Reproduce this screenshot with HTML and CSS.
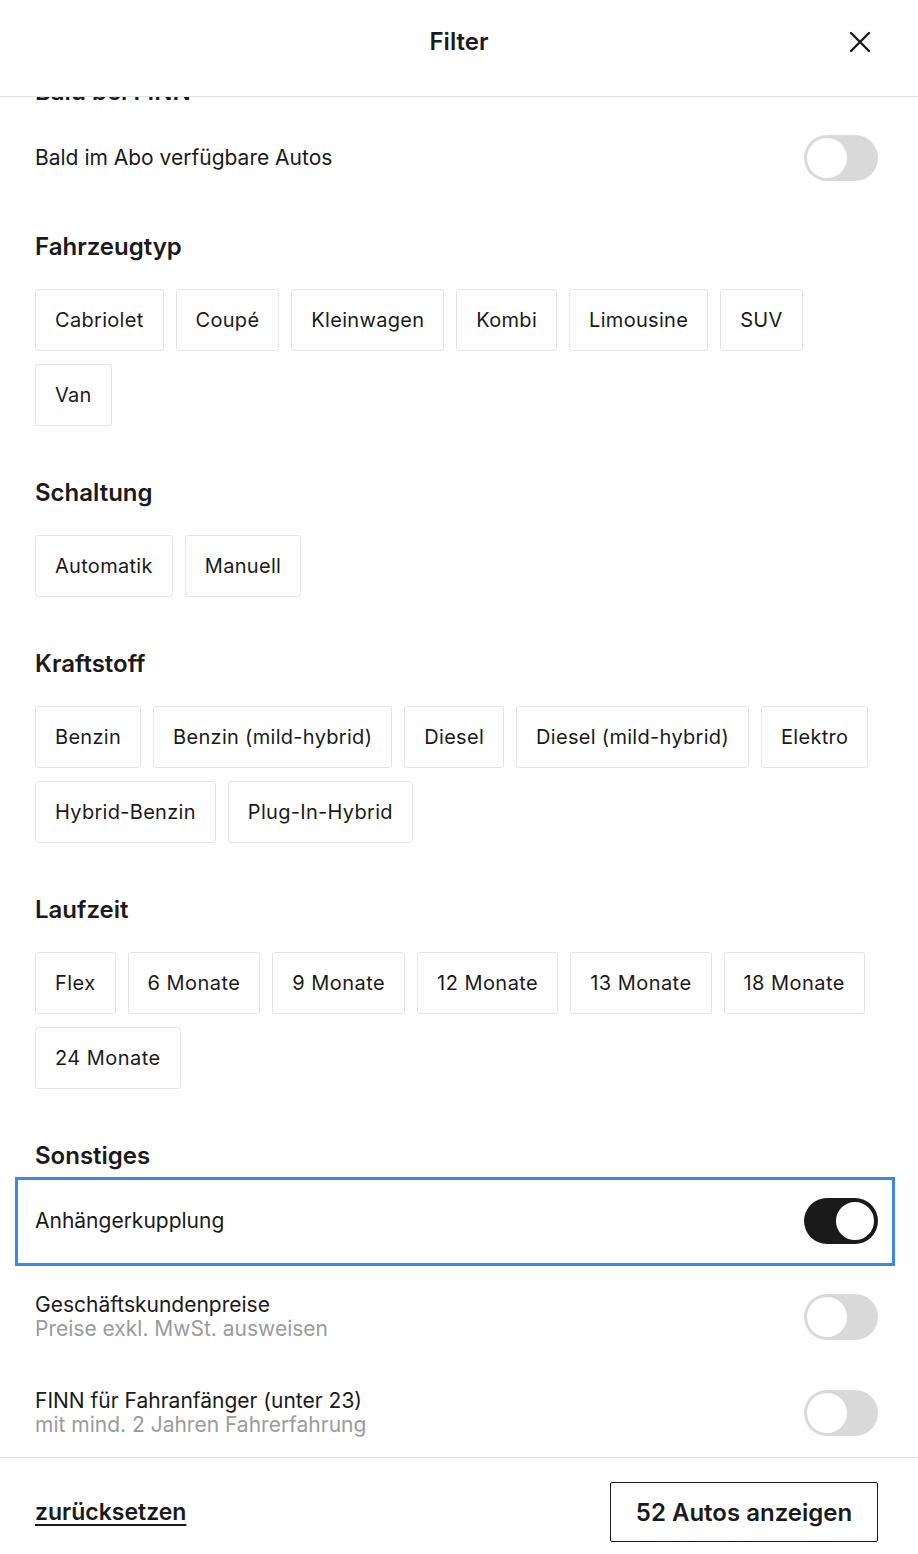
FILE: index.html
```html
<!DOCTYPE html>
<html lang="de">
<head>
    <meta charset="UTF-8">
    <meta name="viewport" content="width=device-width, initial-scale=1.0">
    <title>Filter</title>
    <link rel="stylesheet" href="styles.css">
</head>
<body>
    <div class="modal">
        <header class="modal-header">
            <div class="modal-title">Filter</div>
            <button class="close-btn" aria-label="Schließen">
                <svg width="22" height="22" viewBox="0 0 22 22">
                    <path d="M2 2 L20 20 M20 2 L2 20" stroke="#1a1a1a" stroke-width="2.4" stroke-linecap="round"/>
                </svg>
            </button>
        </header>

        <main class="modal-body">
            <div class="scroll-inner">
                <section class="section">
                    <h2 class="section-title">Bald bei FINN</h2>
                    <div class="switch-row">
                        <div class="switch-label">Bald im Abo verfügbare Autos</div>
                        <span class="toggle"></span>
                    </div>
                </section>

                <section class="section">
                    <h2 class="section-title">Fahrzeugtyp</h2>
                    <div class="chips">
                        <span class="chip">Cabriolet</span>
                        <span class="chip">Coupé</span>
                        <span class="chip">Kleinwagen</span>
                        <span class="chip">Kombi</span>
                        <span class="chip">Limousine</span>
                        <span class="chip">SUV</span>
                        <span class="chip">Van</span>
                    </div>
                </section>

                <section class="section">
                    <h2 class="section-title">Schaltung</h2>
                    <div class="chips">
                        <span class="chip">Automatik</span>
                        <span class="chip">Manuell</span>
                    </div>
                </section>

                <section class="section">
                    <h2 class="section-title">Kraftstoff</h2>
                    <div class="chips">
                        <span class="chip">Benzin</span>
                        <span class="chip">Benzin (mild-hybrid)</span>
                        <span class="chip">Diesel</span>
                        <span class="chip">Diesel (mild-hybrid)</span>
                        <span class="chip">Elektro</span>
                        <span class="chip">Hybrid-Benzin</span>
                        <span class="chip">Plug-In-Hybrid</span>
                    </div>
                </section>

                <section class="section">
                    <h2 class="section-title">Laufzeit</h2>
                    <div class="chips chips-duration">
                        <span class="chip">Flex</span>
                        <span class="chip">6 Monate</span>
                        <span class="chip">9 Monate</span>
                        <span class="chip">12 Monate</span>
                        <span class="chip">13 Monate</span>
                        <span class="chip">18 Monate</span>
                        <span class="chip">24 Monate</span>
                    </div>
                </section>

                <section class="section">
                    <h2 class="section-title">Sonstiges</h2>
                    <div class="switch-list">
                        <div class="switch-row focused">
                            <div class="switch-label">Anhängerkupplung</div>
                            <span class="toggle on"></span>
                        </div>
                        <div class="switch-row">
                            <div class="switch-label">
                                Geschäftskundenpreise
                                <div class="switch-hint">Preise exkl. MwSt. ausweisen</div>
                            </div>
                            <span class="toggle"></span>
                        </div>
                        <div class="switch-row">
                            <div class="switch-label">
                                FINN für Fahranfänger (unter 23)
                                <div class="switch-hint">mit mind. 2 Jahren Fahrerfahrung</div>
                            </div>
                            <span class="toggle"></span>
                        </div>
                    </div>
                </section>
            </div>
        </main>

        <footer class="modal-footer">
            <a class="reset-link" href="#">zurücksetzen</a>
            <button class="submit-btn">52 Autos anzeigen</button>
        </footer>
    </div>
</body>
</html>
```

FILE: styles.css
```css
body {
    margin: 0;
    padding: 0;
    background: #fff;
    font-family: Inter, 'Noto Sans', sans-serif;
    color: #1a1a1a;
}

.modal {
    height: 100vh;
    display: flex;
    flex-direction: column;
    overflow: hidden;
}

.modal-header {
    flex: 0 0 96px;
    display: flex;
    align-items: center;
    justify-content: center;
    position: relative;
    border-bottom: 1px solid #e0e0e0;
}
.modal-title {
    font-size: 24px;
    font-weight: 600;
    margin-top: -14px;
}
.close-btn {
    position: absolute;
    top: 31px;
    right: 47px;
    border: 0;
    background: none;
    padding: 0;
    width: 22px;
    height: 22px;
    display: flex;
}

.modal-body {
    flex: 1;
    overflow: hidden;
}
.scroll-inner {
    padding: 0 40px 0 35px;
    margin-top: -19px;
}

.section {
    margin-bottom: 53px;
}
.section-title {
    margin: 0 0 28px;
    font-size: 24px;
    line-height: 28px;
    font-weight: 600;
}
.section:first-child .section-title {
    margin-bottom: 29px;
}
.section:first-child {
    margin-bottom: 52px;
}

.chips {
    display: flex;
    flex-wrap: wrap;
    gap: 13px 12px;
}
.chip {
    display: inline-flex;
    align-items: center;
    height: 62px;
    box-sizing: border-box;
    padding: 0 19px;
    border: 1px solid #e4e4e4;
    border-radius: 3px;
    font-size: 20px;
    letter-spacing: 0.3px;
}
.chips-duration .chip {
    letter-spacing: 0.45px;
}

.switch-list {
    display: flex;
    flex-direction: column;
    gap: 48px;
}
.switch-row {
    display: flex;
    align-items: center;
    justify-content: space-between;
    font-size: 21px;
    line-height: 24px;
    min-height: 46px;
}
.switch-row.focused {
    margin: -21px -17px -21px -20px;
    padding: 18px 14px 19px 17px;
    border: 3px solid #3d86ef;
}
.switch-hint {
    color: #9b9b9b;
}

.toggle {
    flex: 0 0 74px;
    height: 46px;
    border-radius: 23px;
    background: #d9d9d9;
    position: relative;
}
.toggle::after {
    content: '';
    position: absolute;
    top: 3px;
    left: 3px;
    width: 40px;
    height: 40px;
    border-radius: 50%;
    background: #fff;
}
.toggle.on {
    background: #1a1a1a;
}
.toggle.on::after {
    left: auto;
    right: 2px;
    top: 2px;
    width: 38px;
    height: 38px;
    border: 2px solid #1a1a1a;
}

.modal-footer {
    flex: 0 0 97px;
    border-top: 1px solid #e0e0e0;
    display: flex;
    align-items: flex-start;
    justify-content: space-between;
    padding: 24px 40px 0 35px;
    box-sizing: border-box;
}
.reset-link {
    color: #1a1a1a;
    font-size: 23px;
    font-weight: 600;
    text-decoration: underline;
    text-underline-offset: 4px;
    margin-top: 16px;
}
.submit-btn {
    height: 60px;
    width: 268px;
    border: 1px solid #1a1a1a;
    border-radius: 2px;
    background: #fff;
    font-family: Inter, 'Noto Sans', sans-serif;
    font-size: 24px;
    font-weight: 600;
    color: #1a1a1a;
}
```
